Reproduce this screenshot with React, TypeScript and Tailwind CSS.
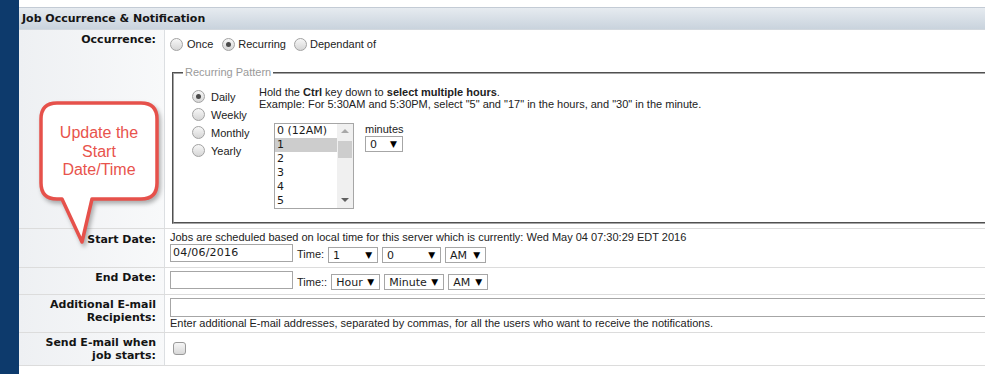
import type { ReactNode } from "react";

const LABEL =
  "font-['DejaVu_Sans',Verdana,sans-serif] font-bold text-[11px] leading-[13px] text-[#141414]";
const CONTROL = "font-['DejaVu_Sans',Verdana,sans-serif] text-[11px] text-[#1a1a1a]";

// ── Small native-looking controls ─────────────────────────────────────────────

function Radio({ checked = false }: { checked?: boolean }) {
  return (
    <span className="w-[13px] h-[13px] shrink-0 rounded-full border border-[#a2a2a2] bg-linear-to-b from-[#f7f7f7] to-[#d6d6d6] flex items-center justify-center">
      {checked && <span className="w-[5px] h-[5px] rounded-full bg-[#4a4a4a]" />}
    </span>
  );
}

function Select({ value, width }: { value: string; width: string }) {
  return (
    <span
      className={`${width} h-[16px] shrink-0 flex items-center justify-between border border-[#a6a6a6] bg-white pl-[4px] pr-[5px] ${CONTROL} leading-none`}
    >
      <span>{value}</span>
      <span className="text-[9px] text-black">▼</span>
    </span>
  );
}

function Row({
  label,
  height,
  children,
}: {
  label: ReactNode;
  height: string;
  children: ReactNode;
}) {
  return (
    <div className={`flex border-b border-[#dcdcdc] ${height}`}>
      <div className="w-[146px] shrink-0 border-r border-[#dcdfe2] bg-linear-to-r from-[#eef0f3] to-[#f8f9fa] pr-[8px] pt-[3px] text-right">
        <div className={LABEL}>{label}</div>
      </div>
      <div className="flex-1 pl-[5px]">{children}</div>
    </div>
  );
}

// ── App ───────────────────────────────────────────────────────────────────────

export default function App() {
  const hours = ["0 (12AM)", "1", "2", "3", "4", "5"];

  return (
    <div className="relative w-[985px] h-[374px] overflow-hidden flex bg-white font-['Liberation_Sans',Arial,sans-serif] text-[11px] text-[#222]">
      <div className="w-[19px] shrink-0 bg-[#0d3a6c]" />

      <div className="w-[990px] shrink-0 pt-[7px]">
        {/* Section header */}
        <div className="h-[23px] border-t border-[#c3cbd5] border-b border-b-[#d2d8de] bg-linear-to-b from-[#e6ebf0] to-[#c9d3dd] pl-[3px] flex items-center">
          <span className={LABEL}>Job Occurrence &amp; Notification</span>
        </div>

        {/* Occurrence */}
        <Row label="Occurrence:" height="h-[199px]">
          <div className="flex items-center h-[14px] mt-[7px]">
            <Radio />
            <span className="ml-[4px] mr-[9px]">Once</span>
            <Radio checked />
            <span className="ml-[3px] mr-[8px]">Recurring</span>
            <Radio />
            <span className="ml-[3px]">Dependant of</span>
          </div>

          <fieldset className="ml-[2px] mt-[15px] w-[820px] h-[158px] border-2 [border-style:groove] border-[#a4a4a4]">
            <legend className="ml-[9px] px-[2px] text-[11px] leading-[13px] text-[#9a9a9a]">
              Recurring Pattern
            </legend>
            <div className="flex">
              <div className="w-[85px] pl-[18px] pt-[8px] flex flex-col">
                {["Daily", "Weekly", "Monthly", "Yearly"].map((d, i) => (
                  <div key={d} className="h-[18px] flex items-center gap-[6px]">
                    <Radio checked={i === 0} />
                    <span className="mt-[2px]">{d}</span>
                  </div>
                ))}
              </div>

              <div className="pt-[7px]">
                <div className="leading-[12px]">
                  Hold the <b>Ctrl</b> key down to <b>select multiple hours</b>.
                </div>
                <div className="leading-[12px]">
                  Example: For 5:30AM and 5:30PM, select "5" and "17" in the hours, and "30" in
                  the minute.
                </div>

                <div className="flex mt-[13px] ml-[15px]">
                  <div className="w-[80px] h-[86px] border border-[#a6a6a6] flex bg-white">
                    <div className={`flex-1 ${CONTROL}`}>
                      {hours.map((h, i) => (
                        <div
                          key={h}
                          className={`h-[14px] leading-[14px] pl-[2px] ${i === 1 ? "bg-[#cdcdcd]" : ""}`}
                        >
                          {h}
                        </div>
                      ))}
                    </div>
                    <div className="w-[16px] bg-[#f0f0f0] flex flex-col items-center">
                      <span className="mt-[5px] w-0 h-0 border-x-[4px] border-x-transparent border-b-[4px] border-b-[#a8a8a8]" />
                      <span className="mt-[8px] w-[14px] h-[17px] bg-[#cdcdcd]" />
                      <span className="mt-auto mb-[6px] w-0 h-0 border-x-[4px] border-x-transparent border-t-[4px] border-t-[#606060]" />
                    </div>
                  </div>

                  <div className="ml-[11px]">
                    <div className="leading-[12px]">minutes</div>
                    <div className="mt-[1px]">
                      <Select value="0" width="w-[38px]" />
                    </div>
                  </div>
                </div>
              </div>
            </div>
          </fieldset>
        </Row>

        {/* Start date */}
        <Row label={<span className="block pt-[1px]">Start Date:</span>} height="h-[39px]">
          <div className="pt-[2px] leading-[13px]">
            Jobs are scheduled based on local time for this server which is currently: Wed May
            04 07:30:29 EDT 2016
          </div>
          <div className="flex items-start">
            <span className={`w-[123px] h-[18px] border border-[#a6a6a6] pl-[2px] leading-[16px] tracking-[0.2px] ${CONTROL}`}>
              04/06/2016
            </span>
            <span className="ml-[4px] mt-[3px] mr-[4px] leading-[14px]">Time:</span>
            <span className="mt-[3px] flex gap-[4px]">
              <Select value="1" width="w-[50px]" />
              <Select value="0" width="w-[59px]" />
              <Select value="AM" width="w-[41px]" />
            </span>
          </div>
        </Row>

        {/* End date */}
        <Row label="End Date:" height="h-[27px]">
          <div className="flex items-start pt-[3px]">
            <span className="w-[123px] h-[18px] border border-[#a6a6a6] bg-white" />
            <span className="ml-[4px] mt-[4px] mr-[4px] leading-[14px]">Time::</span>
            <span className="mt-[3px] flex gap-[4px]">
              <Select value="Hour" width="w-[49px]" />
              <Select value="Minute" width="w-[60px]" />
              <Select value="AM" width="w-[40px]" />
            </span>
          </div>
        </Row>

        {/* Additional recipients */}
        <Row
          label={
            <>
              Additional E-mail
              <br />
              Recipients:
            </>
          }
          height="h-[38px]"
        >
          <div className="pt-[3px]">
            <div className="w-[830px] h-[19px] border border-[#a6a6a6] bg-white" />
            <div className="leading-[12px]">
              Enter additional E-mail addresses, separated by commas, for all the users who want to
              receive the notifications.
            </div>
          </div>
        </Row>

        {/* Send e-mail on start */}
        <Row
          label={
            <>
              Send E-mail when
              <br />
              job starts:
            </>
          }
          height="h-[33px]"
        >
          <span className="mt-[9px] ml-[3px] block w-[13px] h-[13px] rounded-[3px] border border-[#9a9a9a] bg-linear-to-b from-[#f6f6f6] to-[#d8d8d8]" />
        </Row>
      </div>

      {/* Annotation callout */}
      <svg
        className="absolute left-0 top-0 w-[170px] h-[250px] pointer-events-none drop-shadow-[2px_3px_2px_rgba(0,0,0,0.3)]"
        viewBox="0 0 170 250"
      >
        <path
          d="M57 103 H141 Q157 103 157 119 V183 Q157 199 141 199 H92 L82 242 L62 199 H57 Q41 199 41 183 V119 Q41 103 57 103 Z"
          fill="#fff"
          stroke="#e6514b"
          strokeWidth="3.5"
          strokeLinejoin="round"
        />
      </svg>
      <div className="absolute left-[41px] top-[124px] w-[116px] text-center text-[16px] leading-[18.5px] text-[#e8534c]">
        Update the
        <br />
        Start
        <br />
        Date/Time
      </div>
    </div>
  );
}
